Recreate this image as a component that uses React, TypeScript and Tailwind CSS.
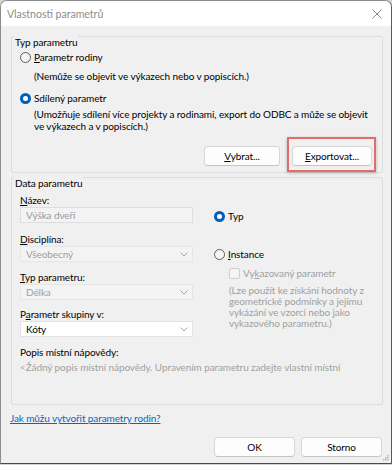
import React from 'react';

const Radio: React.FC<{ checked?: boolean }> = ({ checked }) =>
  checked ? (
    <span className="w-[11px] h-[11px] rounded-full bg-[#005fb8] flex items-center justify-center shrink-0">
      <span className="w-[5px] h-[5px] rounded-full bg-white" />
    </span>
  ) : (
    <span className="w-[11px] h-[11px] rounded-full border border-[#5d5d5d] bg-[#f6f6f6] shrink-0" />
  );

const Chevron = () => (
  <svg width="8" height="5" viewBox="0 0 8 5" className="shrink-0">
    <path d="M0.5 0.5 L4 4 L7.5 0.5" fill="none" stroke="#a8a8a8" strokeWidth="1" />
  </svg>
);

const Select: React.FC<{ value: string; enabled?: boolean }> = ({ value, enabled }) => (
  <div
    className={`h-[16px] flex items-center justify-between pl-[5px] pr-[4px] border ${
      enabled ? 'bg-white border-[#e3e3e3] text-black' : 'bg-[#f3f3f3] border-[#e6e6e6] text-[#a0a0a0]'
    }`}
  >
    <span>{value}</span>
    <Chevron />
  </div>
);

const Button: React.FC<{ children: React.ReactNode; className?: string }> = ({ children, className }) => (
  <div
    className={`h-[20px] flex items-center justify-center bg-[#fdfdfd] border border-[#d6d6d6] border-b-[#c4c4c4] rounded-[4px] ${className ?? ''}`}
  >
    {children}
  </div>
);

const App: React.FC = () => {
  return (
    <div className="w-[392px] h-[465px] bg-[#d4d4d4] font-['Lato',sans-serif] text-[10px] tracking-[-0.1px] leading-[12px] text-black whitespace-nowrap">
      <div className="relative w-[392px] h-[464px] flex flex-col border border-[#8c8c8c] border-r-[#5a5a5a] border-b-[#4a4a4a] rounded-t-[7px] overflow-hidden bg-[#f0f0f0]">
        {/* Title bar */}
        <div className="h-[25px] bg-white flex items-center justify-between pl-[6px] pr-[9px]">
          <span className="text-[10.5px] tracking-[0px] text-[#8c8c8c]">Vlastnosti parametrů</span>
          <svg width="10" height="10" viewBox="0 0 10 10">
            <path d="M0.5 0.5 L9.5 9.5 M9.5 0.5 L0.5 9.5" stroke="#8a8a8a" strokeWidth="1" />
          </svg>
        </div>

        {/* Typ parametru */}
        <div className="relative mt-[10px] ml-[10px] w-[372px] h-[137px] border border-[#dcdcdc] rounded-[2px]">
          <span className="absolute left-[2px] -top-[1px] px-[1px] bg-[#f0f0f0]">Typ parametru</span>
          <div className="pt-[12px] pl-[8px] pr-[10px]">
            <div className="h-[16px] flex items-center gap-[3px]">
              <Radio />
              <span>
                <span className="underline">P</span>arametr rodiny
              </span>
            </div>
            <div className="mt-[5px] pl-[14px]">(Nemůže se objevit ve výkazech nebo v popiscích.)</div>
            <div className="mt-[8px] h-[16px] flex items-center gap-[3px]">
              <Radio checked />
              <span>Sdílený parametr</span>
            </div>
            <div className="mt-[2px] pl-[14px]">
              (Umožňuje sdílení více projekty a rodinami, export do ODBC a může se objevit
              <br />
              ve výkazech a v popiscích.)
            </div>
            <div className="mt-[14px] flex justify-end gap-[12px]">
              <Button className="w-[76px]">
                <span>
                  <span className="underline">V</span>ybrat...
                </span>
              </Button>
              <div className="relative">
                <Button className="w-[80px]">
                  <span>
                    <span className="underline">E</span>xportovat...
                  </span>
                </Button>
                <div className="absolute -left-[5px] -right-[4px] -top-[9px] -bottom-[6px] border-2 border-[#e46b6b] shadow-[0_1px_3px_rgba(0,0,0,0.25)]" />
              </div>
            </div>
          </div>
        </div>

        {/* Data parametru */}
        <div className="relative mt-[4px] ml-[10px] w-[372px] h-[228px] border border-[#dcdcdc] rounded-[2px]">
          <span className="absolute left-[2px] -top-[1px] px-[1px] bg-[#f0f0f0]">Data parametru</span>
          <div className="pt-[15px] pl-[8px]">
            <div className="flex gap-[21px]">
              <div className="w-[173px]">
                <div className="h-[14px] leading-[14px]">
                  <span className="underline">N</span>ázev:
                </div>
                <div className="h-[16px] flex items-center pl-[5px] bg-[#f3f3f3] border border-[#dedede] text-[#9a9a9a]">
                  Výška dveří
                </div>
                <div className="mt-[9px] h-[14px] leading-[14px]">
                  <span className="underline">D</span>isciplína:
                </div>
                <Select value="Všeobecný" />
                <div className="mt-[8px] h-[14px] leading-[14px]">
                  <span className="underline">T</span>yp parametru:
                </div>
                <Select value="Délka" />
                <div className="mt-[7px] h-[14px] leading-[14px]">
                  P<span className="underline">a</span>rametr skupiny v:
                </div>
                <Select value="Kóty" enabled />
              </div>
              <div className="flex flex-col">
                <div className="mt-[15px] h-[16px] flex items-center gap-[3px]">
                  <Radio checked />
                  <span>Typ</span>
                </div>
                <div className="mt-[22px] h-[16px] flex items-center gap-[3px]">
                  <Radio />
                  <span>
                    <span className="underline">I</span>nstance
                  </span>
                </div>
                <div className="mt-[4px] pl-[15px] h-[14px] flex items-center gap-[3px] text-[#a0a0a0]">
                  <span className="w-[11px] h-[11px] rounded-[2px] border border-[#cfcfcf] bg-[#f5f5f5] shrink-0" />
                  <span>
                    Vy<span className="underline">k</span>azovaný parametr
                  </span>
                </div>
                <div className="mt-[5px] pl-[15px] leading-[11px] text-[#a0a0a0]">
                  (Lze použít ke získání hodnoty z<br />
                  geometrické podmínky a jejímu
                  <br />
                  vykázání ve vzorci nebo jako
                  <br />
                  vykazového parametru.)
                </div>
              </div>
            </div>
            <div className="mt-[8px] h-[14px] leading-[14px]">Popis místní nápovědy:</div>
            <div className="mt-[1px] h-[14px] leading-[14px] text-[#a0a0a0]">
              &lt;Žádný popis místní nápovědy. Upravením parametru zadejte vlastní místní
            </div>
          </div>
        </div>

        <div className="mt-[6px] ml-[9px] h-[14px] leading-[14px]">
          <span className="underline text-[#0066cc]">Jak můžu vytvořit parametry rodin?</span>
        </div>

        <div className="mt-[12px] pr-[9px] flex justify-end gap-[6px]">
          <Button className="w-[81px]">OK</Button>
          <Button className="w-[81px]">Storno</Button>
        </div>

        <svg width="6" height="6" viewBox="0 0 6 6" className="absolute right-[2px] bottom-[2px]">
          <rect x="4" y="0" width="1.5" height="1.5" fill="#b5b5b5" />
          <rect x="2" y="2" width="1.5" height="1.5" fill="#b5b5b5" />
          <rect x="4" y="2" width="1.5" height="1.5" fill="#b5b5b5" />
          <rect x="0" y="4" width="1.5" height="1.5" fill="#b5b5b5" />
          <rect x="2" y="4" width="1.5" height="1.5" fill="#b5b5b5" />
          <rect x="4" y="4" width="1.5" height="1.5" fill="#b5b5b5" />
        </svg>
      </div>
    </div>
  );
};

export default App;
